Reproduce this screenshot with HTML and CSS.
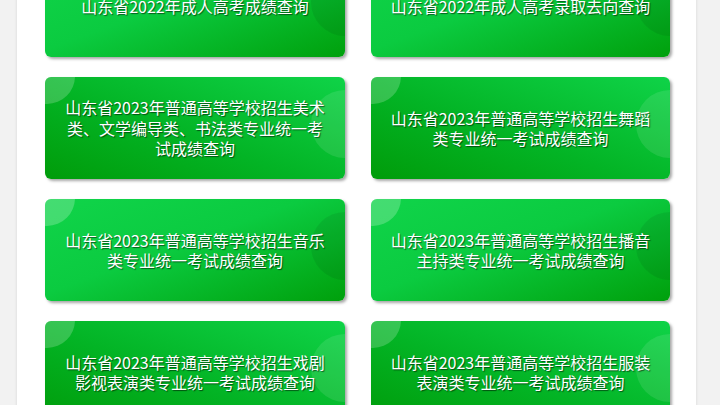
FILE: index.html
```html
<!DOCTYPE html>
<html lang="zh-CN">
<head>
<meta charset="utf-8">
<title>山东省考试成绩查询</title>
<link rel="stylesheet" href="styles.css">
</head>
<body>
<div class="page">
  <div class="grid">
    <a class="card card-a"><span class="dot-tl"></span><span class="dot-r"></span><span class="label">山东省2022年成人高考成绩查询</span></a>
    <a class="card card-a"><span class="dot-tl"></span><span class="dot-r"></span><span class="label">山东省2022年成人高考录取去向查询</span></a>
    <a class="card card-b"><span class="dot-tl"></span><span class="dot-r"></span><span class="label">山东省2023年普通高等学校招生美术类、文学编导类、书法类专业统一考试成绩查询</span></a>
    <a class="card card-b"><span class="dot-tl"></span><span class="dot-r"></span><span class="label">山东省2023年普通高等学校招生舞蹈类专业统一考试成绩查询</span></a>
    <a class="card card-a"><span class="dot-tl"></span><span class="dot-r"></span><span class="label">山东省2023年普通高等学校招生音乐类专业统一考试成绩查询</span></a>
    <a class="card card-a"><span class="dot-tl"></span><span class="dot-r"></span><span class="label">山东省2023年普通高等学校招生播音主持类专业统一考试成绩查询</span></a>
    <a class="card card-b"><span class="dot-tl"></span><span class="dot-r"></span><span class="label">山东省2023年普通高等学校招生戏剧影视表演类专业统一考试成绩查询</span></a>
    <a class="card card-b"><span class="dot-tl"></span><span class="dot-r"></span><span class="label">山东省2023年普通高等学校招生服装表演类专业统一考试成绩查询</span></a>
  </div>
</div>
</body>
</html>
```

FILE: styles.css
```css
html, body {
  margin: 0;
  padding: 0;
  background: #f2f2f2;
  height: 100%;
  overflow: hidden;
}

body {
  font-family: "Noto Sans CJK SC", "Noto Sans", sans-serif;
}

.page {
  width: 679px;
  margin-left: 17px;
  background: #ffffff;
  box-shadow: 0 0 3px rgba(0, 0, 0, 0.12);
  min-height: 100%;
}

.grid {
  display: grid;
  grid-template-columns: 300px 299px;
  column-gap: 26px;
  row-gap: 20px;
  padding: 0 27px 27px 28px;
  margin-top: -45px;
}

.card {
  position: relative;
  overflow: hidden;
  height: 102px;
  border-radius: 6px;
  box-shadow: 2px 2px 3px rgba(0, 0, 0, 0.35);
  display: flex;
  align-items: center;
  justify-content: center;
  padding: 0 18px;
  box-sizing: border-box;
  text-decoration: none;
}

.card-a {
  background: linear-gradient(160deg, #10d44a 0%, #0bcb40 45%, #00a00c 100%);
}

.card-b {
  background: linear-gradient(20deg, #009c0a 0%, #03b425 45%, #0fd348 100%);
}

.dot-tl {
  position: absolute;
  left: -26px;
  top: -29px;
  width: 56px;
  height: 56px;
  border-radius: 50%;
  background: rgba(255, 255, 255, 0.22);
}

.card-b .dot-tl {
  background: rgba(255, 255, 255, 0.2);
}

.dot-r {
  position: absolute;
  right: -34px;
  top: 13px;
  width: 68px;
  height: 68px;
  border-radius: 50%;
  background: rgba(0, 0, 0, 0.07);
}

.card-b .dot-r {
  background: rgba(255, 255, 255, 0.1);
}

.label {
  position: relative;
  color: #ffffff;
  font-size: 16px;
  line-height: 20.5px;
  text-align: center;
  text-shadow: 1px 1px 1px rgba(0, 0, 0, 0.55);
}
```
